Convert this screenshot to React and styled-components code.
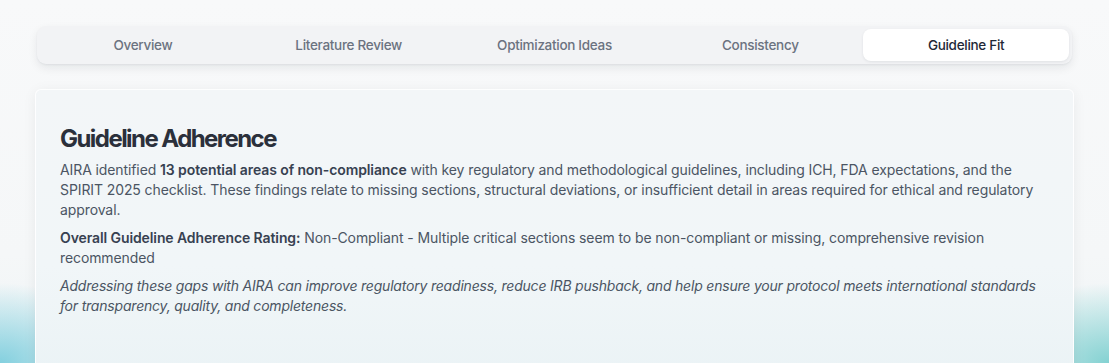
import React, { useState } from "react";
import styled, { createGlobalStyle } from "styled-components";

const GlobalStyle = createGlobalStyle`
  html, body {
    margin: 0;
    padding: 0;
  }
  body {
    font-family: Inter, "Noto Sans", "Liberation Sans", sans-serif;
    background: #f6f8f9;
    -webkit-font-smoothing: antialiased;
  }
`;

const Page = styled.div`
  height: 363px;
  overflow: hidden;
  box-sizing: border-box;
  padding: 26px 35px 0;
  background:
    radial-gradient(ellipse 120px 80px at 0% 100%, rgba(120, 204, 220, 0.9), rgba(120, 204, 220, 0) 100%),
    radial-gradient(ellipse 120px 80px at 100% 100%, rgba(120, 206, 206, 0.9), rgba(120, 206, 206, 0) 100%),
    linear-gradient(180deg, #f8f9fa 0%, #f5f7f8 70%, #eef4f6 100%);
`;

const TabBar = styled.div`
  display: grid;
  grid-template-columns: repeat(5, 1fr);
  margin: 0 2px;
  padding: 3px;
  height: 38px;
  box-sizing: border-box;
  background: #f2f3f5;
  border-radius: 9px;
  box-shadow: 0 4px 10px rgba(15, 23, 42, 0.08), 0 1px 2px rgba(15, 23, 42, 0.05);
`;

const Tab = styled.button`
  border: 0;
  margin: 0;
  font-family: inherit;
  font-size: 13.5px;
  font-weight: 500;
  letter-spacing: -0.3px;
  cursor: pointer;
  border-radius: 8px;
  color: ${(p) => (p.$active ? "#1f2937" : "#6b7280")};
  background: ${(p) => (p.$active ? "#ffffff" : "transparent")};
  box-shadow: ${(p) => (p.$active ? "0 1px 3px rgba(15, 23, 42, 0.08)" : "none")};
`;

const Card = styled.section`
  margin-top: 25px;
  min-height: 320px;
  box-sizing: border-box;
  padding: 33px 24px 24px;
  border-radius: 6px;
  border: 1px solid rgba(255, 255, 255, 0.9);
  background: linear-gradient(180deg, #f3f6f8 0%, #f1f6f8 55%, #e9f2f5 100%);
  box-shadow: 0 2px 14px rgba(15, 23, 42, 0.06);
`;

const Title = styled.h2`
  margin: 0 0 5px;
  font-size: 24px;
  line-height: 32px;
  font-weight: 650;
  letter-spacing: -1.55px;
  color: #2b303b;
`;

const Para = styled.p`
  margin: 0 0 8px;
  font-size: 14px;
  line-height: 20px;
  letter-spacing: ${(p) => (p.$italic ? "-0.2px" : "-0.1px")};
  color: #4b5563;
  font-style: ${(p) => (p.$italic ? "italic" : "normal")};

  strong {
    font-weight: 600;
    color: #374151;
  }
`;

const tabs = ["Overview", "Literature Review", "Optimization Ideas", "Consistency", "Guideline Fit"];

export default function App() {
  const [active, setActive] = useState("Guideline Fit");
  return (
    <Page>
      <GlobalStyle />
      <TabBar>
        {tabs.map((t) => (
          <Tab key={t} $active={t === active} onClick={() => setActive(t)}>
            {t}
          </Tab>
        ))}
      </TabBar>
      <Card>
        <Title>Guideline Adherence</Title>
        <Para>
          AIRA identified <strong>13 potential areas of non-compliance</strong> with key regulatory and
          methodological guidelines, including ICH, FDA expectations, and the SPIRIT 2025 checklist. These
          findings relate to missing sections, structural deviations, or insufficient detail in areas required
          for ethical and regulatory approval.
        </Para>
        <Para>
          <strong>Overall Guideline Adherence Rating:</strong> Non-Compliant - Multiple critical sections seem
          to be non-compliant or missing, comprehensive revision recommended
        </Para>
        <Para $italic>
          Addressing these gaps with AIRA can improve regulatory readiness, reduce IRB pushback, and help ensure
          your protocol meets international standards for transparency, quality, and completeness.
        </Para>
      </Card>
    </Page>
  );
}
